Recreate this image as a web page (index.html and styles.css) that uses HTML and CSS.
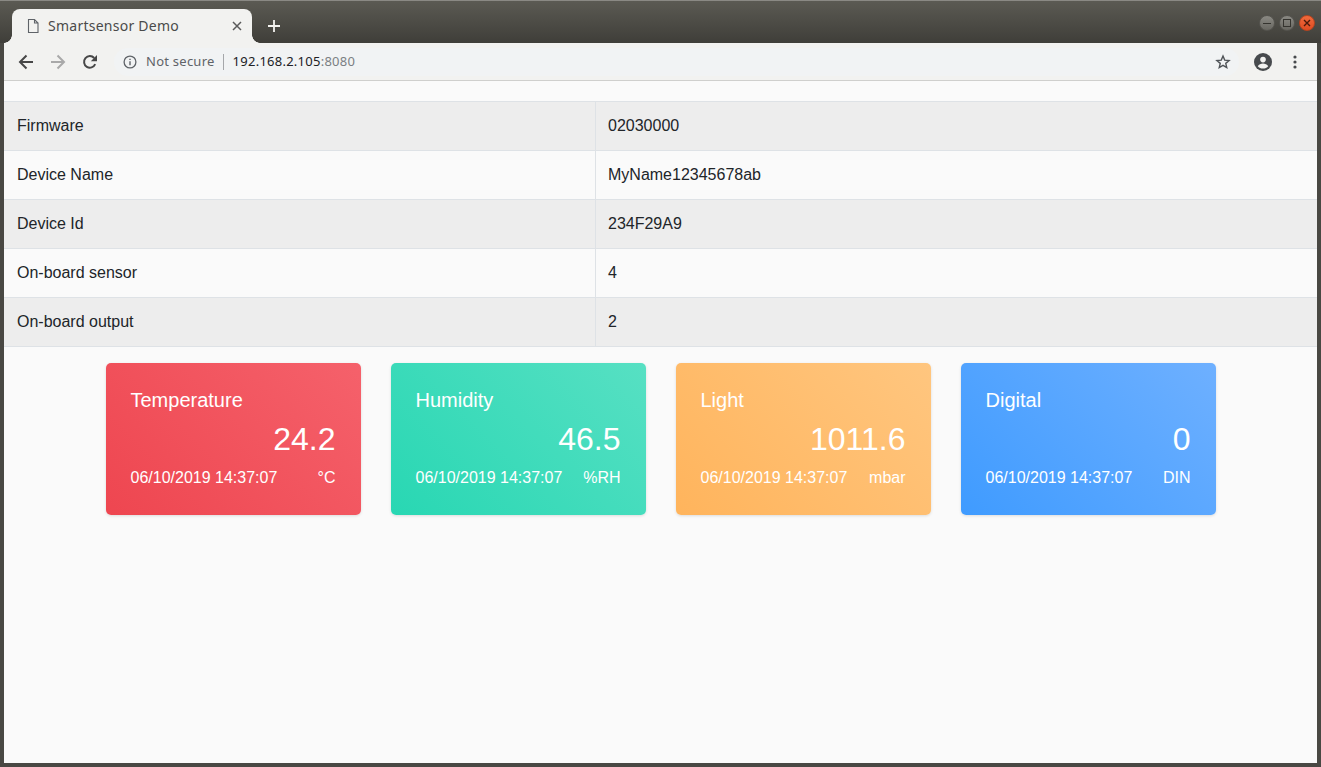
FILE: index.html
```html
<!DOCTYPE html>
<html lang="en">
<head>
<meta charset="utf-8">
<title>Smartsensor Demo</title>
<link rel="stylesheet" href="styles.css">
</head>
<body>
<div class="window">
  <header class="titlebar">
    <div class="tab">
      <svg class="tab-icon" width="16" height="16" viewBox="0 0 16 16"><path d="M3.5 1.5h6l3.5 3.5v9.5h-9.5z M9.5 1.5v3.5h3.5" fill="none" stroke="#5f6368" stroke-width="1.1"/></svg>
      <span class="tab-title">Smartsensor Demo</span>
      <svg class="tab-close" width="10" height="10" viewBox="0 0 10 10"><path d="M1 1l8 8M9 1l-8 8" stroke="#5a5a5a" stroke-width="1.5"/></svg>
    </div>
    <svg class="new-tab" width="12" height="12" viewBox="0 0 12 12"><path d="M6 0v12M0 6h12" stroke="#f4f3f0" stroke-width="1.8"/></svg>
    <div class="win-buttons">
      <span class="win-btn"><i class="win-min"></i></span>
      <span class="win-btn"><i class="win-max"></i></span>
      <span class="win-btn win-btn-close"><svg width="8" height="8" viewBox="0 0 8 8"><path d="M1 1l6 6M7 1l-6 6" stroke="#4a1a0c" stroke-width="1.4"/></svg></span>
    </div>
  </header>
  <nav class="toolbar">
    <svg class="nav-icon" width="16" height="16" viewBox="0 0 16 16"><path d="M15 8H2.5M8.5 1.5L2 8l6.5 6.5" fill="none" stroke="#474747" stroke-width="2"/></svg>
    <svg class="nav-icon nav-forward" width="16" height="16" viewBox="0 0 16 16"><path d="M1 8h12.5M7.5 1.5L14 8l-6.5 6.5" fill="none" stroke="#a9a9a9" stroke-width="2"/></svg>
    <svg class="nav-icon nav-reload" width="16" height="16" viewBox="0 0 16 16"><path d="M13.2 10.2A5.8 5.8 0 1 1 12.2 4" fill="none" stroke="#474747" stroke-width="2"/><path d="M15 1v6.2H8.8z" fill="#474747"/></svg>
    <div class="omnibox">
      <svg class="info-icon" width="14" height="14" viewBox="0 0 14 14"><circle cx="7" cy="7" r="5.9" fill="none" stroke="#5f6368" stroke-width="1.3"/><path d="M7 6.2v4M7 3.7v1.4" stroke="#5f6368" stroke-width="1.4"/></svg>
      <span class="not-secure">Not secure</span>
      <span class="omni-sep"></span>
      <span class="url">192.168.2.105<span class="url-port">:8080</span></span>
      <svg class="star" width="16" height="16" viewBox="0 0 16 16"><path d="M8 2l1.7 4.1 4.4.35-3.35 2.9 1 4.3L8 11.35l-3.75 2.3 1-4.3L1.9 6.45l4.4-.35z" fill="none" stroke="#4f5357" stroke-width="1.4"/></svg>
    </div>
    <svg class="avatar" width="18" height="18" viewBox="0 0 18 18"><circle cx="9" cy="9" r="9" fill="#474a4d"/><circle cx="9" cy="6.6" r="2.8" fill="#f2f2f0"/><path d="M3.8 13.2c1-2 3.2-2.8 5.2-2.8s4.2.8 5.2 2.8c-1.2 1.5-3.1 2.4-5.2 2.4s-4-.9-5.2-2.4z" fill="#f2f2f0"/></svg>
    <svg class="menu" width="4" height="14" viewBox="0 0 4 14"><circle cx="2" cy="2" r="1.6" fill="#474a4d"/><circle cx="2" cy="7" r="1.6" fill="#474a4d"/><circle cx="2" cy="12" r="1.6" fill="#474a4d"/></svg>
  </nav>
  <main class="page">
    <table class="info-table">
      <tbody>
        <tr><td>Firmware</td><td>02030000</td></tr>
        <tr><td>Device Name</td><td>MyName12345678ab</td></tr>
        <tr><td>Device Id</td><td>234F29A9</td></tr>
        <tr><td>On-board sensor</td><td>4</td></tr>
        <tr><td>On-board output</td><td>2</td></tr>
      </tbody>
    </table>
    <section class="cards">
      <article class="card card-red">
        <h2 class="card-title">Temperature</h2>
        <div class="card-value">24.2</div>
        <div class="card-foot"><span>06/10/2019 14:37:07</span><span>°C</span></div>
      </article>
      <article class="card card-green">
        <h2 class="card-title">Humidity</h2>
        <div class="card-value">46.5</div>
        <div class="card-foot"><span>06/10/2019 14:37:07</span><span>%RH</span></div>
      </article>
      <article class="card card-orange">
        <h2 class="card-title">Light</h2>
        <div class="card-value">1011.6</div>
        <div class="card-foot"><span>06/10/2019 14:37:07</span><span>mbar</span></div>
      </article>
      <article class="card card-blue">
        <h2 class="card-title">Digital</h2>
        <div class="card-value">0</div>
        <div class="card-foot"><span>06/10/2019 14:37:07</span><span>DIN</span></div>
      </article>
    </section>
  </main>
</div>
</body>
</html>
```
FILE: styles.css
```css
* { box-sizing: border-box; }
html, body { margin: 0; height: 100%; overflow: hidden; background: #3f3e3a; }
.window {
  height: 767px;
  display: flex;
  flex-direction: column;
  padding: 0 4px 4px;
  background: #494843;
  border-top: 1px solid #8a8984;
}
.titlebar {
  height: 42px;
  margin: 0 -4px;
  padding: 8px 0 0 12px;
  display: flex;
  align-items: stretch;
  background: linear-gradient(#5b5a53, #3f3e39);
}
.tab {
  position: relative;
  width: 240px;
  display: flex;
  align-items: center;
  padding: 0 10px 0 13px;
  background: #f2f2f0;
  border-radius: 8px 8px 0 0;
}
.tab::before, .tab::after {
  content: "";
  position: absolute;
  bottom: 0;
  width: 8px;
  height: 8px;
  background: radial-gradient(circle at 0 0, transparent 7.5px, #f2f2f0 8px);
}
.tab::before { left: -8px; }
.tab::after { right: -8px; background: radial-gradient(circle at 100% 0, transparent 7.5px, #f2f2f0 8px); }
.tab-icon { flex: none; margin-right: 7px; }
.tab-title {
  flex: 1;
  margin-bottom: 2px;
  font: 14px "Noto Sans", sans-serif;
  letter-spacing: 0.25px;
  color: #4a4a4a;
}
.tab-close { flex: none; }
.new-tab { flex: none; align-self: center; margin: 0 0 0 16px; }
.win-buttons {
  margin-left: auto;
  padding: 6px 6px 0 0;
  display: flex;
  gap: 4px;
  align-items: flex-start;
}
.win-btn {
  width: 16px;
  height: 16px;
  border-radius: 50%;
  background: linear-gradient(#8a8983, #686761);
  border: 1px solid #55544f;
  display: flex;
  align-items: center;
  justify-content: center;
}
.win-btn-close { background: linear-gradient(#f06a3c, #df4c22); border-color: #b8441f; }
.win-min { width: 8px; height: 1px; background: #35342f; }
.win-max { width: 8px; height: 8px; border: 1px solid #35342f; }
.toolbar {
  height: 38px;
  display: flex;
  align-items: center;
  padding: 0 0 0 14px;
  background: #f2f2f0;
  border-bottom: 1px solid #cfcfcd;
}
.nav-icon { flex: none; }
.nav-forward { margin-left: 16px; }
.nav-reload { margin-left: 16px; }
.omnibox {
  width: 1125px;
  height: 28px;
  margin-left: 16px;
  padding: 0 8px 0 9px;
  display: flex;
  align-items: center;
  border-radius: 14px;
  background: #f1f3f4;
}
.info-icon { flex: none; }
.not-secure {
  margin: 0 0 2px 9px;
  font: 13px "Noto Sans", sans-serif;
  letter-spacing: 0.25px;
  color: #5f6368;
}
.omni-sep { width: 1px; height: 16px; background: #a5a7aa; margin: 0 9px 0 8px; }
.url { margin-bottom: 2px; font: 13px "Noto Sans", sans-serif; letter-spacing: 0.25px; color: #202124; }
.url-port { color: #7b7f83; }
.star { flex: none; margin-left: auto; }
.avatar { flex: none; margin-left: 15px; }
.menu { flex: none; margin-left: 21px; }
.page {
  flex: 1;
  padding-top: 20px;
  background: #fafafa;
}
.info-table {
  width: 100%;
  border-collapse: collapse;
  table-layout: fixed;
  font: 16px/24px "Liberation Sans", Arial, sans-serif;
  color: #212529;
}
.info-table td {
  padding: 12px 12px 12px 12.5px;
  border-top: 1px solid #dee2e6;
  border-bottom: 1px solid #dee2e6;
  height: 49px;
}
.info-table td:first-child { width: 591px; padding-left: 13px; border-right: 1px solid #dee2e6; }
.info-table tr:nth-child(odd) { background: #ededed; }
.cards {
  margin-top: 16px;
  display: flex;
  justify-content: center;
  gap: 30px;
}
.card {
  width: 255px;
  height: 152px;
  padding: 25px;
  border-radius: 5px;
  color: #fff;
  font-family: "Liberation Sans", Arial, sans-serif;
  box-shadow: 0 1px 3px rgba(0, 0, 0, 0.12);
}
.card-red { background: linear-gradient(45deg, #ee4650, #f5616b); }
.card-green { background: linear-gradient(45deg, #28d7b3, #57e0c3); }
.card-orange { background: linear-gradient(45deg, #ffb45c, #ffc67f); }
.card-blue { background: linear-gradient(45deg, #3f9bff, #6eb0ff); }
.card-title { margin: 0; font-size: 20px; font-weight: 400; line-height: 24px; }
.card-value { font-size: 32px; line-height: 38px; text-align: right; margin-top: 8px; }
.card-foot {
  display: flex;
  justify-content: space-between;
  font-size: 16px;
  line-height: 24px;
  margin-top: 8px;
}
```
